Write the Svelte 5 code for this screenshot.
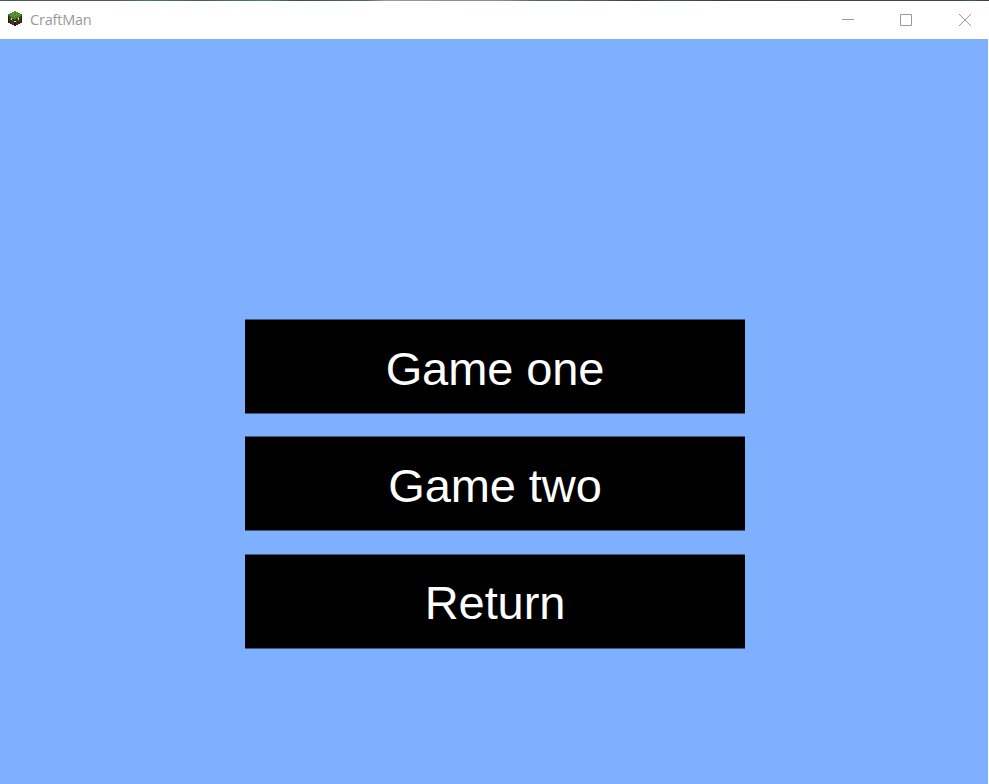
<script>
  const items = ['Game one', 'Game two', 'Return'];

  // Voxel icon: each letter is a palette entry, '.' is empty.
  const palette = {
    g: '#4f8f2c', G: '#3f7c22', l: '#68a83f', d: '#35601d',
    b: '#553826', B: '#3d2718', k: '#2a1b12', t: '#6f4e38', w: '#d5e2cc'
  };
  const pixels = [
    '......gl......',
    '....glgGgg....',
    '..gGglGglgGg..',
    'dgGglgGglGglGd',
    'dGglGglgGlgGgd',
    'kdGGgGlGgGgGdk',
    'kBdgGGgGGggdBk',
    'kbBwdgGGddwBbk',
    'kBtwBkddkBwBBk',
    'kbBBtbkkbBtkbk',
    'kBbkBBwwBbBBtk',
    'kkBbBtkkbBkBkk',
    '..kBbBkkBbBk..',
    '....kBkkBk....',
    '......kk......'
  ].flatMap((row, y) => [...row].map((c, x) => ({ c, x, y })).filter((p) => p.c !== '.'));
</script>

<div class="window">
  <header>
    <svg class="logo" width="14" height="15" viewBox="0 0 14 15" shape-rendering="crispEdges">
      {#each pixels as p}
        <rect x={p.x} y={p.y} width="1" height="1" fill={palette[p.c]} />
      {/each}
    </svg>
    <span class="title">CraftMan</span>
    <div class="controls">
      <svg width="12" height="12" viewBox="0 0 12 12"><path d="M0 5.5H12" /></svg>
      <svg width="12" height="12" viewBox="0 0 12 12"><path d="M.5 .5H11.5V11.5H.5Z" /></svg>
      <svg width="12" height="12" viewBox="0 0 12 12"><path d="M0 0L12 12M12 0L0 12" /></svg>
    </div>
  </header>
  <main>
    {#each items as item}
      <button>{item}</button>
    {/each}
  </main>
</div>

<style>
  :global(body) { background: #fff; }
  .window {
    width: 989px;
    height: 784px;
    display: flex;
    flex-direction: column;
    overflow: hidden;
    background: linear-gradient(90deg, #4b5457 0, #50595c 12%, #4b777a 15%, #485a60 20%, #4f7e80 27%, #414b52 30%, #526669 37%, #a39796 39%, #8f9491 45%, #84908e 51%, #56646b 54%, #50565f 61%, #3a3d43 64%, #45545a 68%, #3c3d40 73%, #434547 97%, #356065 98%, #3d3e3f 100%) top / 100% 1px no-repeat #fff;
  }
  header {
    box-sizing: border-box;
    height: 39px;
    flex: none;
    display: flex;
    align-items: center;
    padding: 1px 18px 0 8px;
  }
  .logo { margin-top: -3px; }
  .title {
    margin-left: 8px;
    color: #999;
    font: 14.5px/20px "Open Sans", "Noto Sans", sans-serif;
    letter-spacing: -0.2px;
  }
  .controls {
    margin-left: auto;
    display: flex;
    gap: 46px;
  }
  .controls svg:last-child { margin-left: 1px; }
  .controls path {
    fill: none;
    stroke: #999;
    stroke-width: 1;
  }
  main {
    box-sizing: border-box;
    width: 988px;
    flex: 1;
    display: flex;
    flex-direction: column;
    align-items: center;
    gap: 22px;
    padding: 280px 0 0 2px;
    background: #7fafff;
  }
  button {
    box-sizing: border-box;
    width: 500px;
    height: 95px;
    flex: none;
    margin: 0;
    padding: 4px 0 0;
    border: 0 solid #40577f;
    border-width: 1px 0;
    background: #000;
    color: #fff;
    font: 47px/54px "Liberation Sans", Arial, sans-serif;
    letter-spacing: -0.1px;
  }
  button:last-child {
    margin-top: 1px;
    padding-top: 2px;
  }
</style>
